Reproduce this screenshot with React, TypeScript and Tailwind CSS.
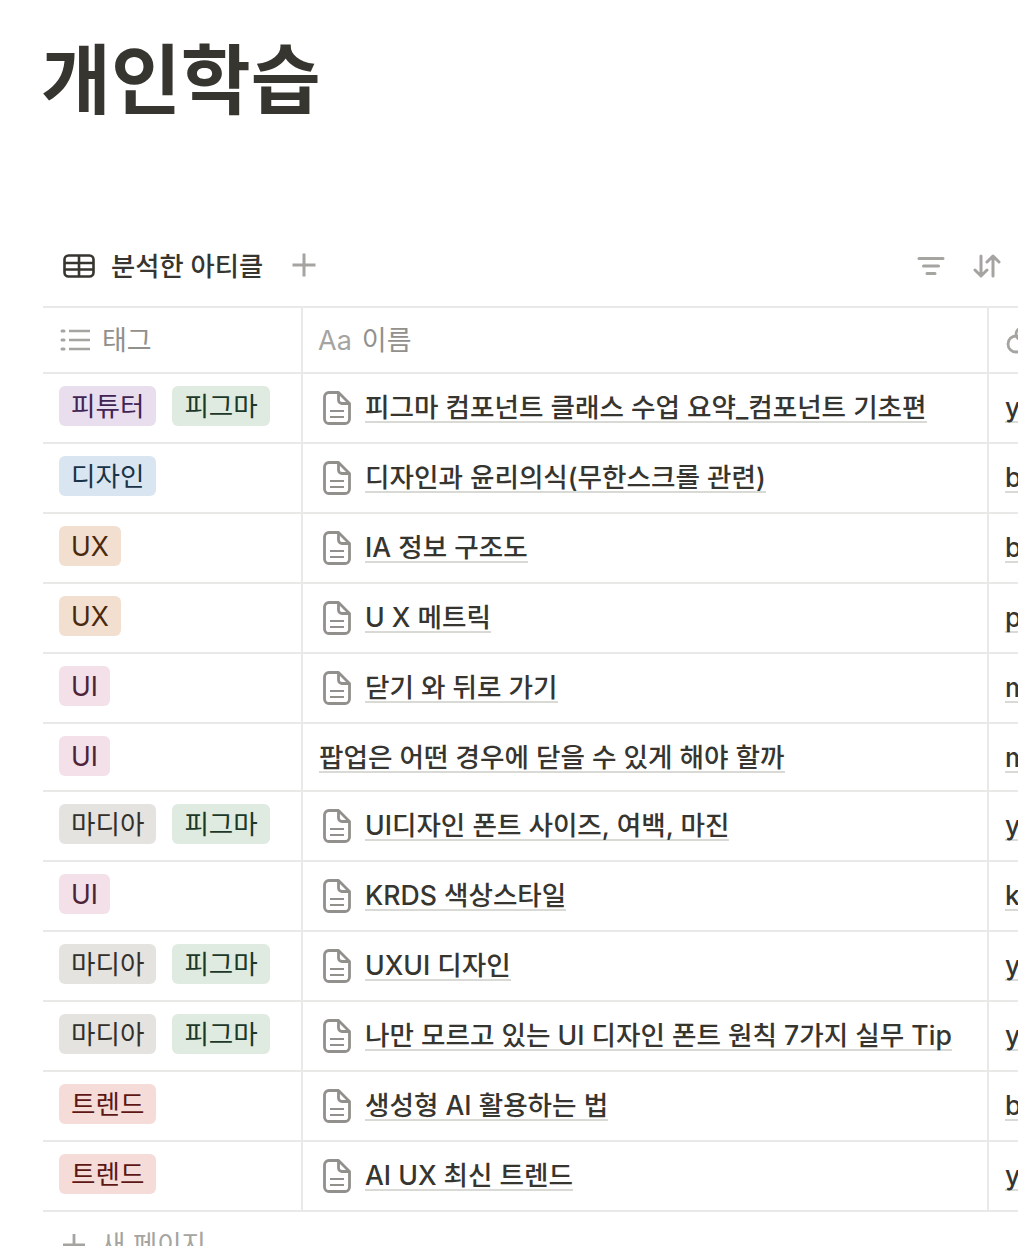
const FONT = "font-['Inter','Noto_Sans_CJK_KR',sans-serif]";

const TAGS: Record<string, string> = {
  피튜터: "bg-[#e8deee] text-[#412454]",
  피그마: "bg-[#dfeae0] text-[#1c3829]",
  디자인: "bg-[#d9e6f1] text-[#183347]",
  UX: "bg-[#f3dfcf] text-[#49290e]",
  UI: "bg-[#f4e0e9] text-[#4c2337]",
  마디아: "bg-[#e4e3e0] text-[#32302c]",
  트렌드: "bg-[#f5dcd9] text-[#5d1715]",
};

const ROWS: { tags: string[]; title: string; icon: boolean; who: string; h: string }[] = [
  { tags: ["피튜터", "피그마"], title: "피그마 컴포넌트 클래스 수업 요약_컴포넌트 기초편", icon: true, who: "y", h: "h-[70px]" },
  { tags: ["디자인"], title: "디자인과 윤리의식(무한스크롤 관련)", icon: true, who: "b", h: "h-[70px]" },
  { tags: ["UX"], title: "IA 정보 구조도", icon: true, who: "b", h: "h-[70px]" },
  { tags: ["UX"], title: "U X 메트릭", icon: true, who: "p", h: "h-[70px]" },
  { tags: ["UI"], title: "닫기 와 뒤로 가기", icon: true, who: "m", h: "h-[70px]" },
  { tags: ["UI"], title: "팝업은 어떤 경우에 닫을 수 있게 해야 할까", icon: false, who: "m", h: "h-[68px]" },
  { tags: ["마디아", "피그마"], title: "UI디자인 폰트 사이즈, 여백, 마진", icon: true, who: "y", h: "h-[70px]" },
  { tags: ["UI"], title: "KRDS 색상스타일", icon: true, who: "k", h: "h-[70px]" },
  { tags: ["마디아", "피그마"], title: "UXUI 디자인", icon: true, who: "y", h: "h-[70px]" },
  { tags: ["마디아", "피그마"], title: "나만 모르고 있는 UI 디자인 폰트 원칙 7가지 실무 Tip", icon: true, who: "y", h: "h-[70px]" },
  { tags: ["트렌드"], title: "생성형 AI 활용하는 법", icon: true, who: "b", h: "h-[70px]" },
  { tags: ["트렌드"], title: "AI UX 최신 트렌드", icon: true, who: "y", h: "h-[70px]" },
];

function DocIcon() {
  return (
    <svg width="28" height="34" viewBox="0 0 28 34" fill="none" stroke="#91908c" strokeWidth="2.8" className="shrink-0">
      <path d="M6 1.5h9.5L26.5 12.5V28a4.5 4.5 0 0 1-4.5 4.5H6A4.5 4.5 0 0 1 1.5 28V6A4.5 4.5 0 0 1 6 1.5Z" strokeLinejoin="round" />
      <path d="M15.5 1.5V9a3.5 3.5 0 0 0 3.5 3.5h7.5" />
      <path d="M7 20h14M7 26h14" strokeWidth="2" />
    </svg>
  );
}

function Row({ r }: { r: (typeof ROWS)[number] }) {
  return (
    <div className={`flex ${r.h} border-b-2 border-[#e9e9e7]`}>
      <div className="w-[260px] shrink-0 border-r-2 border-[#e9e9e7] flex gap-4 px-4 pt-[12px]">
        {r.tags.map((t) => (
          <span key={t} className={`h-10 rounded-md px-3 text-[26.6px] leading-[40px] ${TAGS[t]}`}>{t}</span>
        ))}
      </div>
      <div className="w-[686px] shrink-0 border-r-2 border-[#e9e9e7] flex items-start pl-[16px]">
        {r.icon && <span className="ml-1 mr-[14px] mt-[17px]"><DocIcon /></span>}
        <span className="mt-[15px] text-[26.6px] leading-[36px] font-medium text-[#37352f] border-b-2 border-[#d9d9d6] h-[34px] whitespace-nowrap">{r.title}</span>
      </div>
      <div className="w-[100px] shrink-0 pl-4 pt-[15px] text-[26.6px] leading-[36px] font-medium text-[#37352f]">
        <span className="border-b-2 border-[#d9d9d6] inline-block h-[34px]">{r.who}</span>
      </div>
    </div>
  );
}

export default function App() {
  return (
    <div className={`w-[1018px] h-[1246px] overflow-hidden bg-white pl-[43px] ${FONT}`}>
      <h1 className="pt-[30px] h-[228px] -ml-[2px] text-[76px] leading-[100px] font-bold text-[#37352f] whitespace-nowrap">개인학습</h1>

      <div className="flex items-center h-[78px] pl-5 pr-[17px] w-[975px]">
        <svg width="32" height="24" viewBox="0 0 32 24" fill="none" stroke="#37352f" strokeWidth="2.6" className="-mt-0.5">
          <rect x="1.5" y="1.5" width="29" height="21" rx="4" />
          <path d="M1.5 9h29M1.5 15.5h29M16 1.5v21" />
        </svg>
        <span className="ml-4 text-[26.3px] font-medium text-[#37352f] leading-none">분석한 아티클</span>
        <svg width="26" height="26" viewBox="0 0 26 26" stroke="#a5a4a0" strokeWidth="3" className="ml-[28px] -mt-1">
          <path d="M13 1.5v23M1.5 13h23" />
        </svg>
        <div className="ml-auto flex items-center gap-[28px] -mt-0.5">
          <svg width="28" height="20" viewBox="0 0 28 20" fill="none" stroke="#a5a4a0" strokeWidth="3" strokeLinecap="round">
            <path d="M2 2.5h24M6.5 10h15M10 17.5h8" />
          </svg>
          <svg width="28" height="26" viewBox="0 0 28 26" fill="none" stroke="#a5a4a0" strokeWidth="3" strokeLinecap="round" strokeLinejoin="round">
            <path d="M8 3v20M2 17l6 6 6-6M20 23V3M14 9l6-6 6 6" />
          </svg>
        </div>
      </div>

      <div className="w-[1044px] border-t-2 border-[#e9e9e7]">
        <div className="flex h-[66px] border-b-2 border-[#e9e9e7] text-[#91908c] text-[27px]">
          <div className="w-[260px] shrink-0 border-r-2 border-[#e9e9e7] flex items-center pl-[17px]">
            <svg width="30" height="24" viewBox="0 0 30 24" fill="none" stroke="#a5a4a0" strokeWidth="2.6">
              <path d="M9 3h21M9 12h21M9 21h21" />
              <path d="M2 3h2M2 12h2M2 21h2" strokeWidth="3" strokeLinecap="round" />
            </svg>
            <span className="ml-[12px] pt-0.5">태그</span>
          </div>
          <div className="w-[686px] shrink-0 border-r-2 border-[#e9e9e7] flex items-center pl-[15px]">
            <span className="text-[#a5a4a0] pt-0.5">Aa</span>
            <span className="ml-[10px] pt-0.5">이름</span>
          </div>
          <div className="w-[100px] shrink-0 flex items-center pl-4">
            <svg width="30" height="30" viewBox="0 0 30 30" fill="none" stroke="#a5a4a0" strokeWidth="2.8">
              <circle cx="11" cy="19" r="8" />
              <circle cx="17" cy="9" r="6" />
            </svg>
          </div>
        </div>
        {ROWS.map((r, i) => <Row key={i} r={r} />)}
      </div>

      <div className="flex items-center h-[66px] pl-[19px] text-[26.5px] text-[#a5a4a0]">
        <svg width="24" height="24" viewBox="0 0 24 24" stroke="#a5a4a0" strokeWidth="2.8"><path d="M12 1v22M1 12h22" /></svg>
        <span className="ml-[15px]">새 페이지</span>
      </div>
    </div>
  );
}
